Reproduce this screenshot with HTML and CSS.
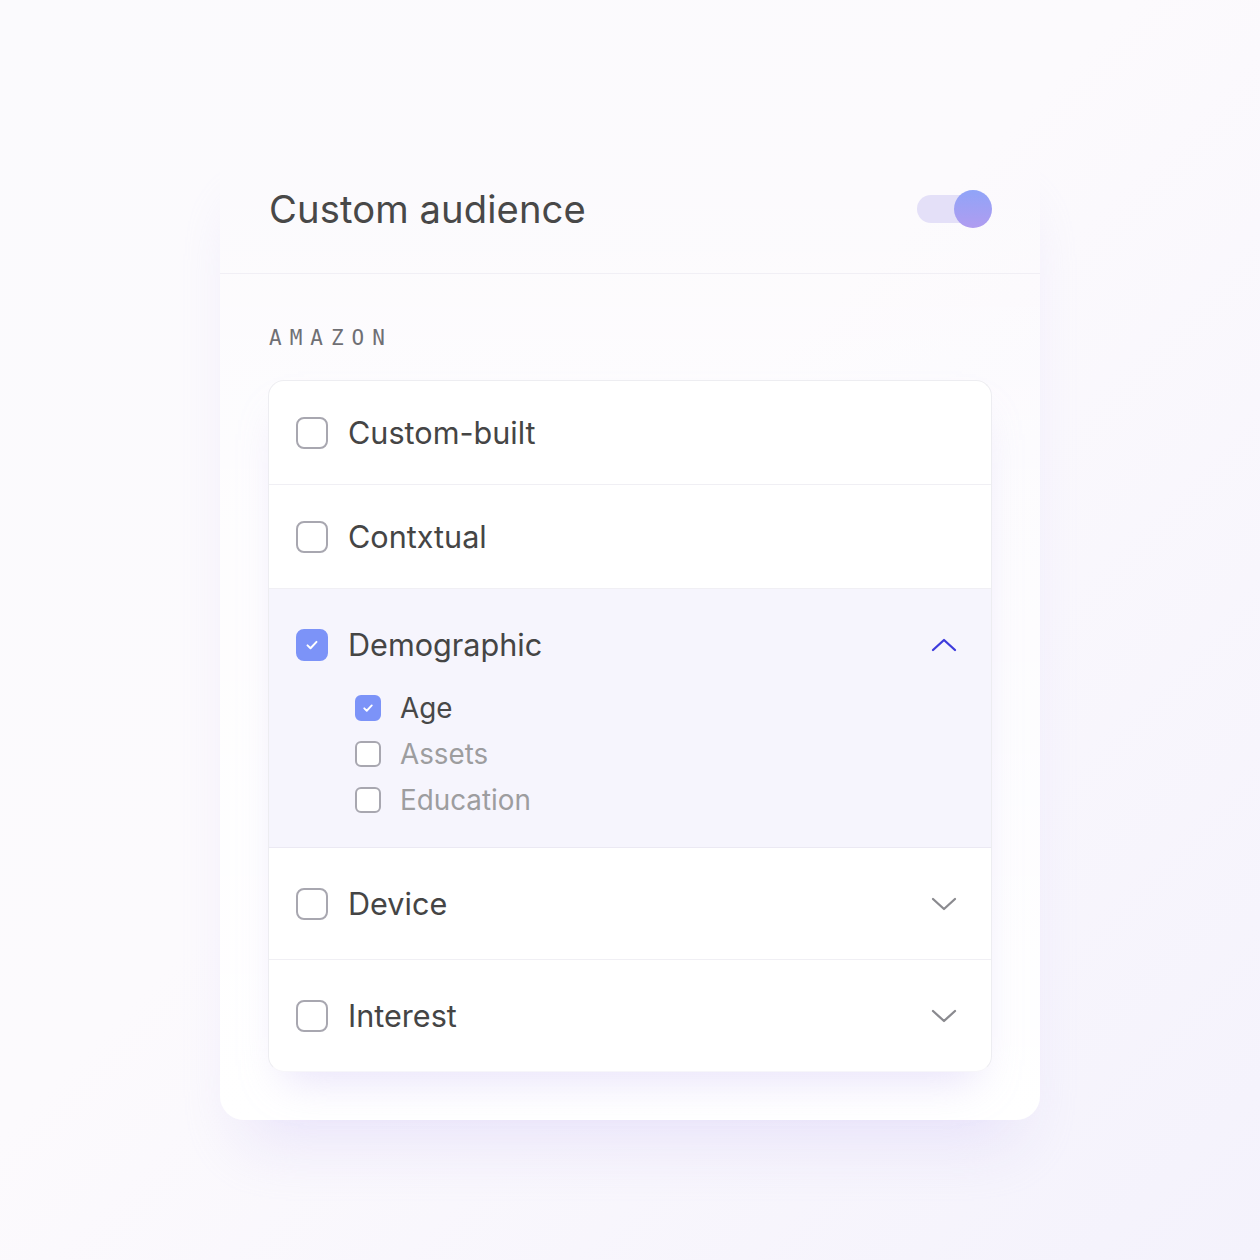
FILE: index.html
```html
<!DOCTYPE html>
<html lang="en">
<head>
    <meta charset="UTF-8">
    <meta name="viewport" content="width=device-width, initial-scale=1.0">
    <title>Custom audience</title>
    <link rel="stylesheet" href="styles.css">
</head>
<body>
    <div class="card">
        <div class="head">
            <h1>Custom audience</h1>
            <div class="toggle">
                <div class="track"></div>
                <div class="knob"></div>
            </div>
        </div>

        <div class="content">
            <div class="label">AMAZON</div>

            <div class="list">
                <div class="row">
                    <span class="box"></span>
                    <span class="name">Custom-built</span>
                </div>
                <div class="row">
                    <span class="box"></span>
                    <span class="name">Contxtual</span>
                </div>
                <div class="row open">
                    <div class="row-head">
                        <span class="box checked">
                            <svg viewBox="0 0 12 12" width="12" height="12"><path d="M1.5 6.4l3 2.9 6-6.4" fill="none" stroke="#fff" stroke-width="2" stroke-linecap="round" stroke-linejoin="round"/></svg>
                        </span>
                        <span class="name">Demographic</span>
                        <svg class="chev up" viewBox="0 0 26 16" width="26" height="16"><path d="M2 13L13 3l11 10" fill="none" stroke="#3d3bdc" stroke-width="2.3" stroke-linecap="round" stroke-linejoin="round"/></svg>
                    </div>
                    <div class="subs">
                        <div class="sub">
                            <span class="box small checked">
                                <svg viewBox="0 0 12 12" width="10" height="10"><path d="M1.5 6.4l3 2.9 6-6.4" fill="none" stroke="#fff" stroke-width="2.2" stroke-linecap="round" stroke-linejoin="round"/></svg>
                            </span>
                            <span class="sub-name on">Age</span>
                        </div>
                        <div class="sub">
                            <span class="box small"></span>
                            <span class="sub-name">Assets</span>
                        </div>
                        <div class="sub">
                            <span class="box small"></span>
                            <span class="sub-name">Education</span>
                        </div>
                    </div>
                </div>
                <div class="row tall">
                    <span class="box"></span>
                    <span class="name">Device</span>
                    <svg class="chev" viewBox="0 0 26 16" width="26" height="16"><path d="M2 3l11 10 11-10" fill="none" stroke="#8a8a8f" stroke-width="2.3" stroke-linecap="round" stroke-linejoin="round"/></svg>
                </div>
                <div class="row tall">
                    <span class="box"></span>
                    <span class="name">Interest</span>
                    <svg class="chev" viewBox="0 0 26 16" width="26" height="16"><path d="M2 3l11 10 11-10" fill="none" stroke="#8a8a8f" stroke-width="2.3" stroke-linecap="round" stroke-linejoin="round"/></svg>
                </div>
            </div>
        </div>
    </div>
</body>
</html>
```

FILE: styles.css
```css
body{
    margin: 0;
    min-height: 1260px;
    background: linear-gradient(135deg, #fbfafd 0%, #fcfafd 45%, #f4f2fc 100%);
    font-family: 'Inter', 'Roboto', sans-serif;
}

.card{
    width: 820px;
    margin: 144px auto 0;
    border-radius: 24px;
    background: linear-gradient(to bottom, rgba(255,255,255,0) 0%, rgba(255,255,255,0.6) 40%, #fff 100%);
    box-shadow: 0 44px 60px -24px rgba(222, 214, 248, 0.6);
}

.head{
    height: 129px;
    padding: 0 48px 0 49px;
    display: flex;
    align-items: center;
    justify-content: space-between;
    border-bottom: 1px solid #f1eff5;
}

h1{
    margin: 0;
    font-size: 38.2px;
    font-weight: 400;
    color: #484848;
    letter-spacing: 0.1px;
}

.toggle{
    position: relative;
    width: 75px;
    height: 38px;
}

.track{
    position: absolute;
    left: 0;
    top: 5px;
    width: 70px;
    height: 28px;
    border-radius: 14px;
    background: #e4e0f8;
}

.knob{
    position: absolute;
    right: 0;
    top: 0;
    width: 38px;
    height: 38px;
    border-radius: 50%;
    background: linear-gradient(to bottom, #90a4f8, #b09cf0);
}

.content{
    padding: 52px 48px 48px;
}

.label{
    font-family: 'DejaVu Sans Mono', 'Liberation Mono', monospace;
    font-size: 21px;
    line-height: 24px;
    letter-spacing: 8px;
    color: #6f6f74;
    margin-bottom: 30px;
    margin-left: 1px;
}

.list{
    background: #fff;
    border: 1px solid #ededf1;
    border-bottom-color: #f7f6fa;
    border-radius: 16px;
    overflow: hidden;
    box-shadow: 0 24px 40px -16px rgba(222, 214, 248, 0.7);
}

.row{
    height: 103px;
    padding: 0 34px 0 27px;
    display: flex;
    align-items: center;
    border-bottom: 1px solid #f0eff4;
}

.row.tall{
    height: 111px;
}

.row:last-child{
    border-bottom: 0;
}

.row.open{
    height: auto;
    display: block;
    background: #f6f5fd;
    padding-top: 37px;
    padding-bottom: 24px;
    border-bottom-color: #ebe9f3;
}

.row-head{
    display: flex;
    align-items: center;
}

.box{
    width: 28px;
    height: 28px;
    flex: none;
    border: 2px solid #a8a7b0;
    border-radius: 8px;
    display: flex;
    align-items: center;
    justify-content: center;
    background: #fff;
}

.box.checked{
    border-color: #7c93f8;
    background: #7c93f8;
}

.box.small{
    width: 22px;
    height: 22px;
    border-radius: 6px;
}

.name{
    margin-left: 20px;
    font-size: 30.6px;
    color: #454545;
    flex: 1;
}

.chev{
    flex: none;
}

.subs{
    padding: 22px 0 0 59px;
}

.sub{
    display: flex;
    align-items: center;
    height: 46px;
}

.sub-name{
    margin-left: 19px;
    font-size: 27.8px;
    color: #9d9d9f;
}

.sub-name.on{
    color: #484848;
}
```
